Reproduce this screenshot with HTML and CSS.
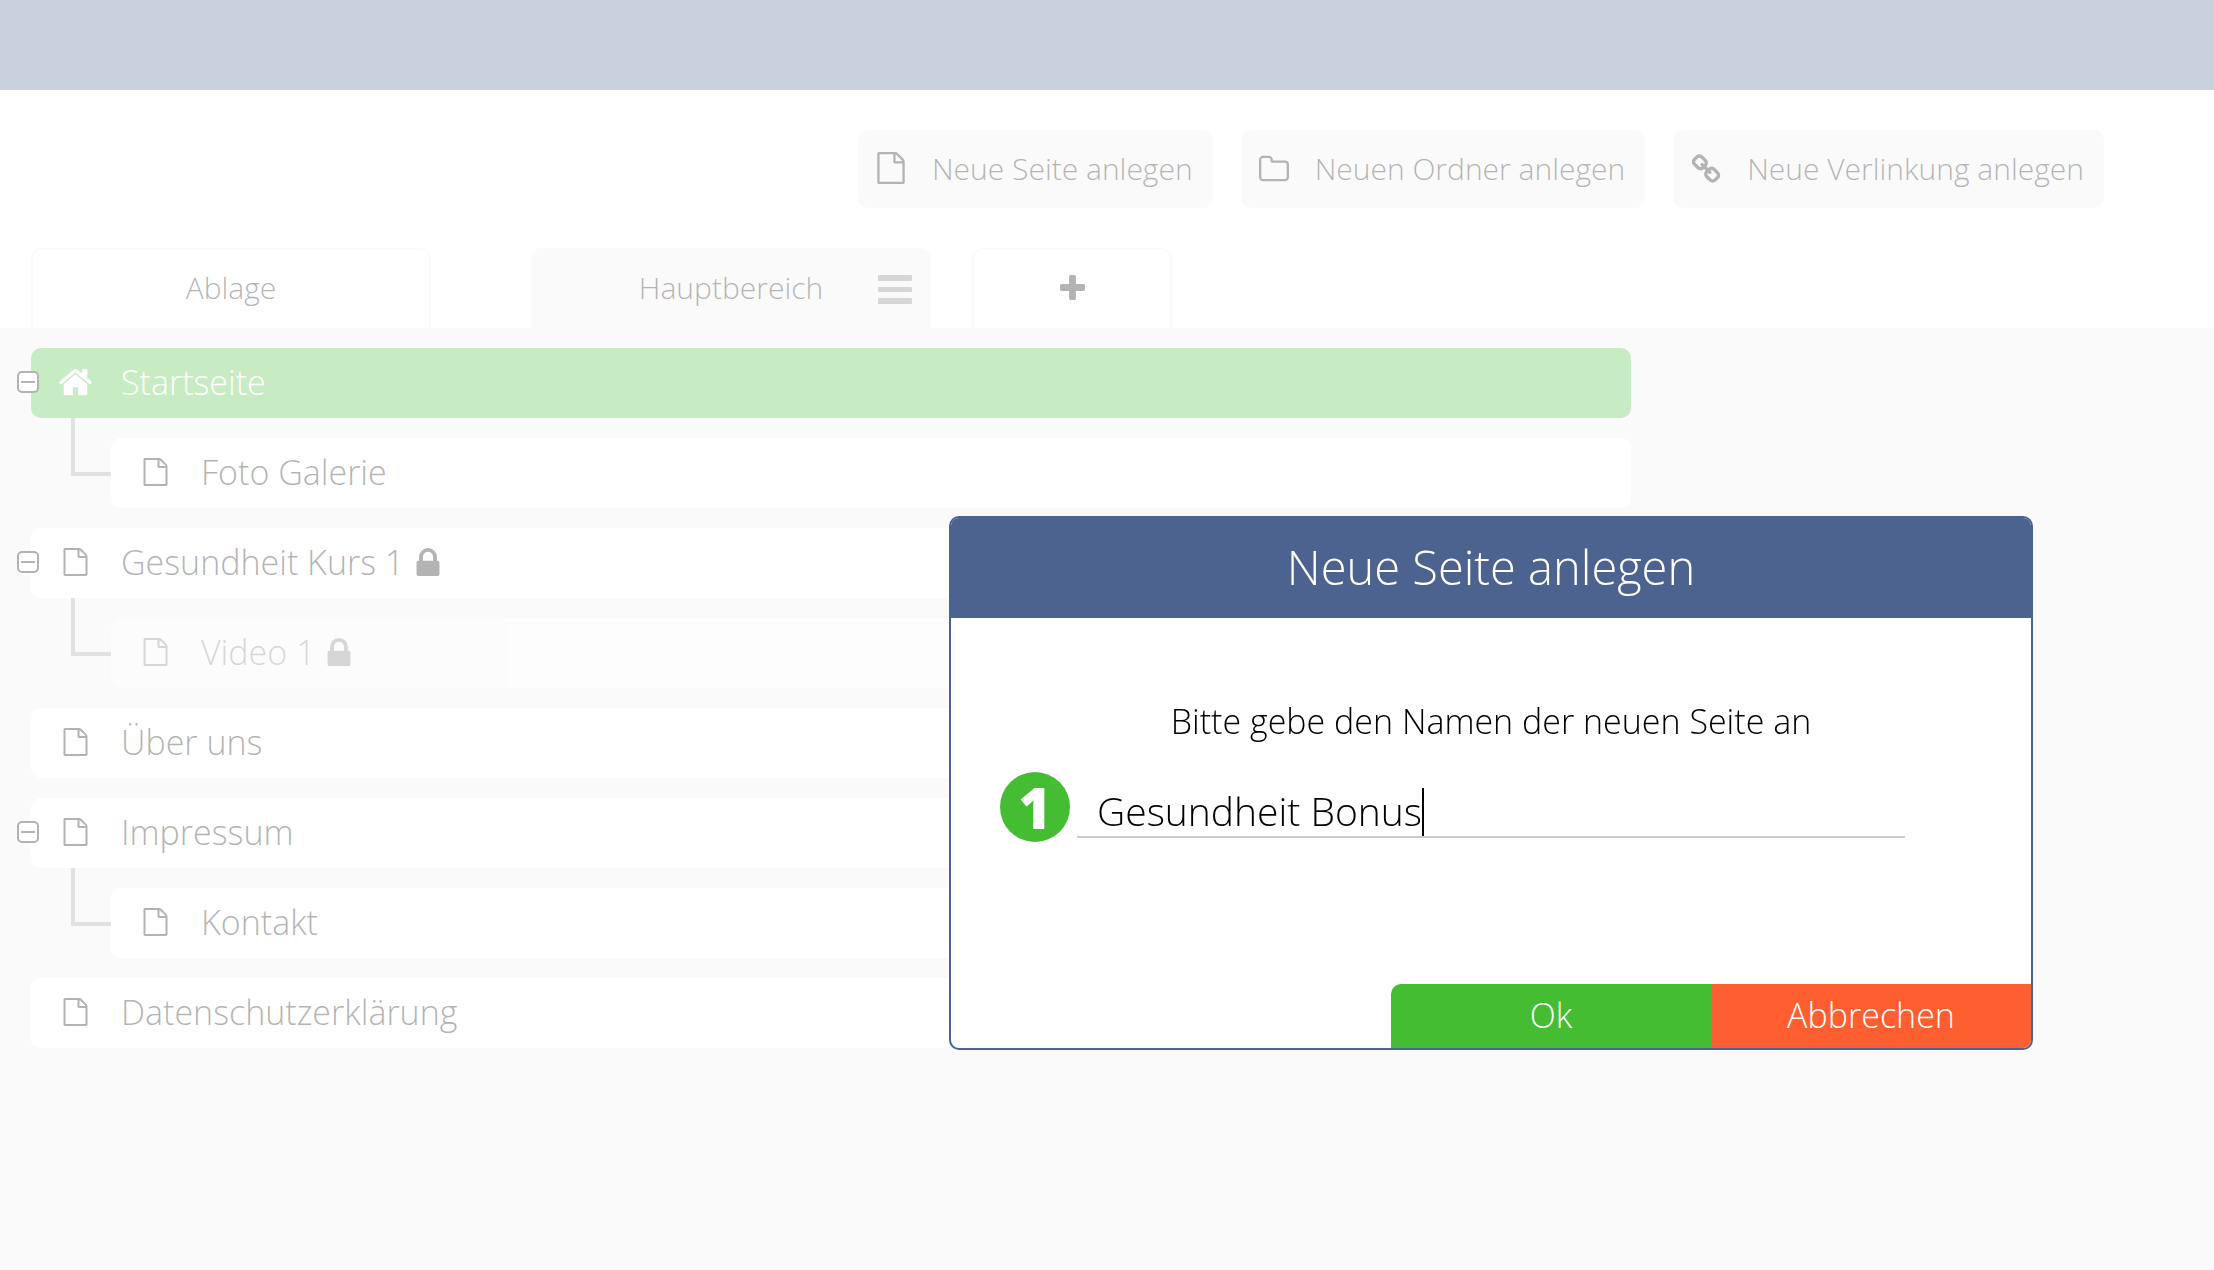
FILE: index.html
```
<!DOCTYPE html>
<html lang="de">
<head>
    <meta charset="UTF-8">
    <meta name="viewport" content="width=device-width, initial-scale=1.0">
    <title>Seitenverwaltung</title>
    <link rel="stylesheet" href="styles.css">
</head>
<body>
    <!-- Icons -->
    <svg class="icon-defs" aria-hidden="true">
        <symbol id="icon-file" viewBox="0 0 1536 1792">
            <path d="M1468 380q28 28 48 76t20 88v1152q0 40-28 68t-68 28h-1344q-40 0-68-28t-28-68v-1600q0-40 28-68t68-28h896q40 0 88 20t76 48zm-444-244v376h376q-10-29-22-41l-313-313q-12-12-41-22zm384 1528v-1024h-416q-40 0-68-28t-28-68v-416h-768v1536h1280z"/>
        </symbol>
        <symbol id="icon-folder" viewBox="64 128 1664 1408">
            <path d="M1600 1312v-704q0-40-28-68t-68-28h-704q-40 0-68-28t-28-68v-64q0-40-28-68t-68-28h-320q-40 0-68 28t-28 68v960q0 40 28 68t68 28h1216q40 0 68-28t28-68zm128-704v704q0 92-66 158t-158 66h-1216q-92 0-158-66t-66-158v-960q0-92 66-158t158-66h320q92 0 158 66t66 158v32h672q92 0 158 66t66 158z"/>
        </symbol>
        <symbol id="icon-link" viewBox="64 0 1664 1664">
            <path d="M1520 1216q0-40-28-68l-208-208q-28-28-68-28-42 0-72 32 3 3 19 18.5t21.5 21.5 15 19 13 25.5 3.5 27.5q0 40-28 68t-68 28q-15 0-27.5-3.5t-25.5-13-19-15-21.5-21.5-18.5-19q-33 31-33 73 0 40 28 68l206 207q27 27 68 27 40 0 68-26l147-146q28-28 28-67zm-703-705q0-40-28-68l-206-207q-28-28-68-28-39 0-68 27l-147 146q-28 28-28 67 0 40 28 68l208 208q27 27 68 27 42 0 72-31-3-3-19-18.5t-21.5-21.5-15-19-13-25.5-3.5-27.5q0-40 28-68t68-28q15 0 27.5 3.5t25.5 13 19 15 21.5 21.5 18.5 19q33-31 33-73zm895 705q0 120-85 203l-147 146q-83 83-203 83-121 0-204-85l-206-207q-83-83-83-203 0-123 88-209l-88-88q-86 88-208 88-120 0-204-84l-208-208q-84-84-84-204t85-203l147-146q83-83 203-83 121 0 204 85l206 207q83 83 83 203 0 123-88 209l88 88q86-88 208-88 120 0 204 84l208 208q84 84 84 204z"/>
        </symbol>
        <symbol id="icon-home" viewBox="89 250 1614 1286">
            <path d="M1472 992v480q0 26-19 45t-45 19h-384v-384h-256v384h-384q-26 0-45-19t-19-45v-480q0-1 .5-3t.5-3l575-474 575 474q1 2 1 6zm223-69l-62 74q-8 9-21 11h-3q-13 0-21-7l-692-577-692 577q-12 8-24 7-13-2-21-11l-62-74q-8-10-7-23.5t11-21.5l719-599q32-26 76-26t76 26l244 204v-195q0-14 9-23t23-9h192q14 0 23 9t9 23v408l219 182q10 8 11 21.5t-7 23.5z"/>
        </symbol>
        <symbol id="icon-lock" viewBox="320 128 1152 1408">
            <path d="M640 768h512v-192q0-106-75-181t-181-75-181 75-75 181v192zm832 96v576q0 40-28 68t-68 28h-960q-40 0-68-28t-28-68v-576q0-40 28-68t68-28h32v-192q0-184 132-316t316-132 316 132 132 316v192h32q40 0 68 28t28 68z"/>
        </symbol>
        <symbol id="icon-plus" viewBox="192 128 1408 1408">
            <path d="M1600 736v192q0 40-28 68t-68 28h-416v416q0 40-28 68t-68 28h-192q-40 0-68-28t-28-68v-416h-416q-40 0-68-28t-28-68v-192q0-40 28-68t68-28h416v-416q0-40 28-68t68-28h192q40 0 68 28t28 68v416h416q40 0 68 28t28 68z"/>
        </symbol>
        <symbol id="icon-bars" viewBox="0 0 34 29">
            <path d="M1 0h32q1 0 1 1v4q0 1-1 1h-32q-1 0-1-1v-4q0-1 1-1zM1 12h32q1 0 1 1v3q0 1-1 1h-32q-1 0-1-1v-3q0-1 1-1zM1 23h32q1 0 1 1v4q0 1-1 1h-32q-1 0-1-1v-4q0-1 1-1z"/>
        </symbol>
    </svg>

    <header class="topbar"></header>

    <div class="toolbar">
        <button type="button" class="tool-btn">
            <svg class="icon tool-icon tool-file"><use href="#icon-file"/></svg>
            Neue Seite anlegen
        </button>
        <button type="button" class="tool-btn">
            <svg class="icon tool-icon"><use href="#icon-folder"/></svg>
            Neuen Ordner anlegen
        </button>
        <button type="button" class="tool-btn">
            <svg class="icon tool-icon"><use href="#icon-link"/></svg>
            Neue Verlinkung anlegen
        </button>
    </div>

    <nav class="tabs">
        <button type="button" class="tab">Ablage</button>
        <div class="tab active">
            <a href="#hauptbereich">Hauptbereich</a>
            <button type="button" class="tab-menu" aria-label="Menü">
                <svg class="icon"><use href="#icon-bars"/></svg>
            </button>
        </div>
        <button type="button" class="tab tab-add" aria-label="Bereich hinzufügen">
            <svg class="icon"><use href="#icon-plus"/></svg>
        </button>
    </nav>

    <main class="content">
        <ul class="tree">
            <li>
                <button type="button" class="toggle" aria-label="Zuklappen"></button>
                <a href="#startseite" class="row home">
                    <svg class="icon row-icon"><use href="#icon-home"/></svg>
                    <span>Startseite</span>
                </a>
                <ul class="subtree">
                    <li>
                        <a href="#foto-galerie" class="row">
                            <svg class="icon row-icon"><use href="#icon-file"/></svg>
                            <span>Foto Galerie</span>
                        </a>
                    </li>
                </ul>
            </li>
            <li>
                <button type="button" class="toggle" aria-label="Zuklappen"></button>
                <a href="#gesundheit-kurs-1" class="row">
                    <svg class="icon row-icon"><use href="#icon-file"/></svg>
                    <span>Gesundheit Kurs 1</span>
                    <svg class="icon lock"><use href="#icon-lock"/></svg>
                </a>
                <ul class="subtree">
                    <li>
                        <a href="#video-1" class="row hidden-page">
                            <svg class="icon row-icon"><use href="#icon-file"/></svg>
                            <span>Video 1</span>
                            <svg class="icon lock"><use href="#icon-lock"/></svg>
                        </a>
                    </li>
                </ul>
            </li>
            <li>
                <a href="#ueber-uns" class="row">
                    <svg class="icon row-icon"><use href="#icon-file"/></svg>
                    <span>Über uns</span>
                </a>
            </li>
            <li>
                <button type="button" class="toggle" aria-label="Zuklappen"></button>
                <a href="#impressum" class="row">
                    <svg class="icon row-icon"><use href="#icon-file"/></svg>
                    <span>Impressum</span>
                </a>
                <ul class="subtree">
                    <li>
                        <a href="#kontakt" class="row">
                            <svg class="icon row-icon"><use href="#icon-file"/></svg>
                            <span>Kontakt</span>
                        </a>
                    </li>
                </ul>
            </li>
            <li>
                <a href="#datenschutz" class="row">
                    <svg class="icon row-icon"><use href="#icon-file"/></svg>
                    <span>Datenschutzerklärung</span>
                </a>
            </li>
        </ul>
    </main>

    <!-- Dialog -->
    <div class="overlay">
        <form class="modal" role="dialog" aria-labelledby="modalTitle">
            <h2 id="modalTitle" class="modal-title">Neue Seite anlegen</h2>
            <div class="modal-body">
                <label for="pageName">Bitte gebe den Namen der neuen Seite an</label>
                <div class="field-row">
                    <span class="step">1</span>
                    <div class="field">
                        <input type="text" id="pageName" value="Gesundheit Bonus">
                        <span class="caret"></span>
                    </div>
                </div>
            </div>
            <div class="modal-actions">
                <button type="submit" class="btn-ok">Ok</button>
                <button type="button" class="btn-cancel">Abbrechen</button>
            </div>
        </form>
    </div>
</body>
</html>
```
FILE: styles.css
```
* {
    margin: 0;
    padding: 0;
    box-sizing: border-box;
}

body {
    font-family: 'Open Sans', 'Noto Sans', sans-serif;
    font-weight: 300;
    font-size: 30px;
    color: #000;
    background: #fff;
    min-height: 100vh;
    display: flex;
    flex-direction: column;
}

button,
input {
    font: inherit;
    color: inherit;
    background: none;
    border: none;
}

button {
    cursor: pointer;
}

a {
    color: inherit;
    text-decoration: none;
}

ul {
    list-style: none;
}

.icon-defs {
    position: absolute;
    width: 0;
    height: 0;
}

.icon {
    display: block;
    fill: currentColor;
    flex-shrink: 0;
}

/* header */
.topbar {
    height: 90px;
    background: #4c628f;
}

.toolbar {
    display: flex;
    justify-content: flex-end;
    gap: 28px;
    padding: 40px 110px 40px 31px;
}

.tool-btn {
    display: flex;
    align-items: center;
    gap: 26px;
    height: 78px;
    padding: 0 20px 2px 18px;
    border-radius: 10px;
    background: #eee;
    white-space: nowrap;
}

.tool-icon {
    width: 30px;
    height: 29px;
}

.tool-file {
    height: 32px;
}

/* tabs */
.tabs {
    display: flex;
    padding: 0 31px;
}

.tab {
    display: flex;
    align-items: center;
    justify-content: center;
    position: relative;
    width: 400px;
    height: 80px;
    padding-bottom: 4px;
    border: 2px solid #eee;
    border-bottom: none;
    border-radius: 10px 10px 0 0;
}

.tab.active {
    margin: 0 41px 0 100px;
    background: #eee;
}

.tab-menu {
    position: absolute;
    top: 25px;
    right: 17px;
    color: #757575;
}

.tab-menu .icon {
    width: 34px;
    height: 29px;
}

.tab-add {
    width: 200px;
}

.tab-add .icon {
    width: 25px;
    height: 25px;
}

/* page tree */
.content {
    flex: 1;
    padding: 20px 31px;
    background: #eee;
}

.tree {
    max-width: 1600px;
    font-size: 34px;
}

.tree li {
    position: relative;
    margin-bottom: 20px;
}

.row {
    display: flex;
    align-items: center;
    height: 70px;
    padding: 0 28px 2px;
    border-radius: 10px;
    background: #fff;
}

.row-icon {
    width: 33px;
    height: 28px;
    margin-right: 29px;
}

.row.home {
    background: #44bd32;
    color: #fff;
}

.row.hidden-page {
    opacity: 0.5;
}

.lock {
    width: 24px;
    height: 28px;
    margin-left: 12px;
}

.subtree {
    margin-top: 20px;
    padding-left: 80px;
}

.subtree li::before {
    content: "";
    position: absolute;
    box-sizing: border-box;
    top: -20px;
    left: -40px;
    width: 40px;
    height: 58px;
    border-left: 4px solid #999;
    border-bottom: 4px solid #999;
}

.toggle {
    display: flex;
    align-items: center;
    justify-content: center;
    position: absolute;
    top: 23px;
    left: -14px;
    width: 22px;
    height: 22px;
    border: 2px solid #000;
    border-radius: 5px;
    background: #fff;
}

.toggle::before {
    content: "";
    width: 14px;
    height: 2px;
    background: #000;
}

/* dialog */
.overlay {
    position: fixed;
    inset: 0;
    display: flex;
    justify-content: flex-end;
    align-items: flex-start;
    padding: 516px 181px 0;
    background: rgba(255, 255, 255, 0.7);
}

.modal {
    width: 100%;
    max-width: 1084px;
    border: 2px solid #4c628f;
    border-radius: 10px;
    background: #fff;
    overflow: hidden;
    font-size: 34px;
}

.modal-title {
    font-size: 47px;
    font-weight: 300;
    line-height: 98px;
    padding-bottom: 2px;
    text-align: center;
    color: #fff;
    background: #4c628f;
}

.modal-body {
    padding: 78px 0 142px;
}

.modal-body label {
    display: block;
    line-height: 50px;
    text-align: center;
}

.field-row {
    display: flex;
    gap: 7px;
    padding: 26px 126px 0 49px;
}

.step {
    width: 70px;
    height: 70px;
    border-radius: 50%;
    background: #44bd32;
    color: #fff;
    font-size: 56px;
    font-weight: 800;
    line-height: 70px;
    text-align: center;
}

.field {
    flex: 1;
    display: flex;
    height: 66px;
    padding: 16px 0 0 20px;
    border-bottom: 2px solid #ccc;
}

.field input {
    field-sizing: content;
    height: 44px;
    font-size: 39px;
    outline: none;
}

.caret {
    width: 2px;
    height: 48px;
    background: #000;
}

.modal-actions {
    display: flex;
    justify-content: flex-end;
}

.modal-actions button {
    width: 320px;
    height: 64px;
    padding-bottom: 2px;
    color: #fff;
}

.modal-actions .btn-ok {
    border-radius: 10px 0 0 0;
    background: #44bd32;
}

.modal-actions .btn-cancel {
    background: #ff5e30;
}
```
